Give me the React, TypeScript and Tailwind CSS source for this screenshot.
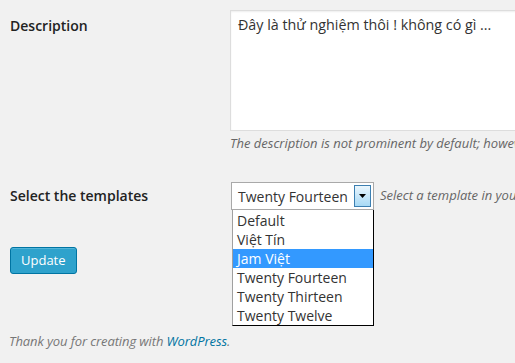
import React from "react";

const options = [
  "Default",
  "Việt Tín",
  "Jam Việt",
  "Twenty Fourteen",
  "Twenty Thirteen",
  "Twenty Twelve",
];

export default function App() {
  return (
    <div
      className="w-[515px] h-[363px] overflow-hidden bg-[#f1f1f1] text-[#222] relative"
      style={{ fontFamily: '"Open Sans", "Noto Sans", sans-serif' }}
    >
      {/* Description row */}
      <div className="flex pt-[10px]">
        <div className="w-[230px] shrink-0 pl-[10px] pt-[6px] text-[14px] font-semibold leading-[20px]">
          Description
        </div>
        <div className="flex flex-col">
          <div className="w-[320px] h-[121px] bg-white border border-[#ddd] shadow-[inset_0_1px_2px_rgba(0,0,0,0.07)] px-[7px] pt-[4px] text-[14.3px] leading-[20px] text-[#333]">
            Đây là thử nghiệm thôi ! không có gì ...
          </div>
          <p className="mt-[4px] text-[13px] italic text-[#666] whitespace-nowrap leading-[17px]">
            The description is not prominent by default; however, some themes may show it.
          </p>
        </div>
      </div>

      {/* Template row */}
      <div className="flex mt-[30px]">
        <div className="w-[231px] shrink-0 pl-[10px] pt-[4px] text-[14px] font-semibold leading-[20px]">
          Select the templates
        </div>
        <div className="relative">
          <div className="w-[143px] h-[28px] bg-white border border-[#a9a9a9] flex items-center justify-between pl-[6px] pr-[2px] text-[14px] text-[#333]">
            <span>Twenty Fourteen</span>
            <span className="w-[17px] h-[22px] border border-[#3c7fb1] bg-gradient-to-b from-[#eaf6fd] to-[#a7d9f5] flex items-center justify-center">
              <svg width="7" height="4" viewBox="0 0 7 4">
                <path d="M0 0h7L3.5 4z" fill="#000" />
              </svg>
            </span>
          </div>
          <ul className="absolute left-[1px] top-[28px] w-[142px] bg-white border-l border-l-[#a0a0a0] border-r border-b border-black text-[14px] text-[#333] leading-[19px] z-10 pt-[1px]">
            {options.map((o) => (
              <li
                key={o}
                className={
                  o === "Jam Việt"
                    ? "bg-[#3399ff] text-white pl-[4px] h-[19px]"
                    : "pl-[4px] h-[19px]"
                }
              >
                {o}
              </li>
            ))}
          </ul>
        </div>
        <p className="ml-[6px] pt-[5px] text-[13px] italic text-[#666] whitespace-nowrap leading-[17px]">
          Select a template in your list
        </p>
      </div>

      {/* Update button */}
      <div className="pl-[10px] mt-[37px]">
        <button className="h-[27px] px-[10px] bg-[#2ea2cc] border border-[#0074a2] rounded-[3px] text-white text-[13px] shadow-[inset_0_1px_0_rgba(120,200,230,0.5)]">
          Update
        </button>
      </div>

      {/* Footer */}
      <p className="pl-[9px] mt-[59px] text-[13px] italic text-[#777] leading-[17px] tracking-[-0.1px]">
        Thank you for creating with <span className="text-[#0074a2]">WordPress</span>.
      </p>
    </div>
  );
}
